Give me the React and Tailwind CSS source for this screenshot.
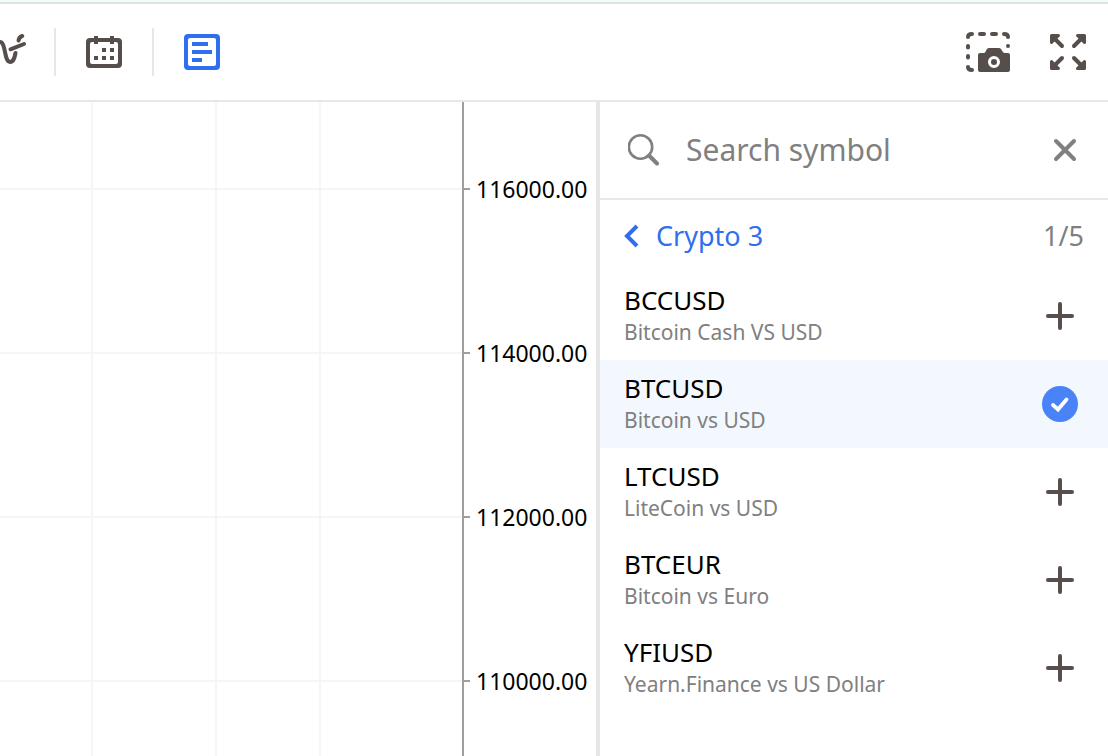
import React, { useState } from "react";

const SYMBOLS = [
    { code: "BCCUSD", description: "Bitcoin Cash VS USD" },
    { code: "BTCUSD", description: "Bitcoin vs USD" },
    { code: "LTCUSD", description: "LiteCoin vs USD" },
    { code: "BTCEUR", description: "Bitcoin vs Euro" },
    { code: "YFIUSD", description: "Yearn.Finance vs US Dollar" },
];

const PRICES = ["116000.00", "114000.00", "112000.00", "110000.00"];

function IndicatorsIcon() {
    return (
        <svg width="44" height="44" viewBox="-20 30 44 44" className="overflow-visible" fill="none" stroke="#564e4a" strokeWidth="4" strokeLinecap="round">
            <path d="M-17 53h8c5 0 4-11 9-11 6 0 4 20 10 20 3.500 0 4.500-4 5.500-9" />
            <path d="M10.500 49.300l13.500-5.300" />
            <path d="M18.500 40.500c0.500-2.500 2-4 3.800-4.500" />
        </svg>
    );
}

function CalendarIcon() {
    return (
        <svg width="36" height="36" viewBox="0 0 36 36" fill="#564e4a">
            <path fillRule="evenodd" d="M8 2h4v2h12V2h4v2h4a4 4 0 0 1 4 4v22a4 4 0 0 1-4 4H4a4 4 0 0 1-4-4V8a4 4 0 0 1 4-4h4zM6 8a2 2 0 0 0-2 2v18a2 2 0 0 0 2 2h24a2 2 0 0 0 2-2V10a2 2 0 0 0-2-2h-2v2h-4V8H12v2H8V8z" />
            <path d="M16 14h4v4h-4zM24 14h4v4h-4zM8 22h4v4H8zM16 22h4v4h-4zM24 22h4v4h-4z" />
        </svg>
    );
}

function WatchlistIcon() {
    return (
        <svg width="36" height="36" viewBox="0 0 36 36" fill="#2f6fed">
            <path fillRule="evenodd" d="M4 0h28a4 4 0 0 1 4 4v28a4 4 0 0 1-4 4H4a4 4 0 0 1-4-4V4a4 4 0 0 1 4-4zM6 4a2 2 0 0 0-2 2v24a2 2 0 0 0 2 2h24a2 2 0 0 0 2-2V6a2 2 0 0 0-2-2z" />
            <path d="M8 8h16v4H8zM8 16h20v4H8zM8 24h10v4H8z" />
        </svg>
    );
}

function ScreenshotIcon() {
    return (
        <svg width="44" height="40" viewBox="0 0 44 40">
            <path d="M2 5c0-2 1-3 4-3M14 2h4M26 2h4M38 2c3 0 4 1 4 3M42 14v0.100M2 14v1.500M2 24v1.500M2 35c0 2 1 3 4 3" fill="none" stroke="#564e4a" strokeWidth="4" strokeLinecap="round" />
            <path fillRule="evenodd" d="M14 21h4c2 0 2-5 5-5h10c3 0 3 5 6 5h3a2 2 0 0 1 2 2v15a2 2 0 0 1-2 2H14a2 2 0 0 1-2-2V23a2 2 0 0 1 2-2zM28 24a6 6 0 1 0 0 12 6 6 0 0 0 0-12z" fill="#564e4a" />
            <circle cx="28" cy="30" r="3" fill="#564e4a" />
        </svg>
    );
}

function FullscreenIcon() {
    return (
        <svg width="36" height="36" viewBox="0 0 36 36" fill="#564e4a" stroke="#564e4a" strokeLinecap="round" strokeLinejoin="round">
            {[0, 90, 180, 270].map((angle) => (
                <g key={angle} transform={`rotate(${angle} 18 18)`}>
                    <path d="M12 12L4 4" strokeWidth="4" />
                    <path d="M1.500 1.500h7l-7 7z" strokeWidth="3" />
                </g>
            ))}
        </svg>
    );
}

function Toolbar() {
    return (
        <header className="border-t-2 border-[#dbe5e5] bg-white">
            <div className="flex h-24 items-center justify-between overflow-hidden pr-[22px]">
                <div className="flex items-center gap-[30px]">
                    <button type="button" aria-label="Indicators" className="-ml-5">
                        <IndicatorsIcon />
                    </button>
                    <span className="h-12 w-0.5 bg-[#e7e7e7]" />
                    <button type="button" aria-label="Calendar">
                        <CalendarIcon />
                    </button>
                    <span className="h-12 w-0.5 bg-[#e7e7e7]" />
                    <button type="button" aria-label="Watchlist">
                        <WatchlistIcon />
                    </button>
                </div>
                <div className="flex items-center gap-10">
                    <button type="button" aria-label="Screenshot">
                        <ScreenshotIcon />
                    </button>
                    <button type="button" aria-label="Fullscreen">
                        <FullscreenIcon />
                    </button>
                </div>
            </div>
        </header>
    );
}

function Chart() {
    return (
        <main className="flex min-w-0 flex-1">
            <div className="min-w-0 flex-1 overflow-hidden">
                <svg className="h-full w-full" stroke="#f5f5f5" strokeWidth="2">
                    {[92, 216, 320].map((x) => (
                        <line key={x} x1={x} x2={x} y1="0" y2="100%" />
                    ))}
                    {[87, 251, 415, 579].map((y) => (
                        <line key={y} x1="0" x2="100%" y1={y} y2={y} />
                    ))}
                </svg>
            </div>
            <ul className="w-[134px] border-l-2 border-[#9e9e9e] pt-[5px]">
                {PRICES.map((price) => (
                    <li key={price} className="flex h-[164px] items-center gap-1.5 text-[23px] leading-8 text-black">
                        <span className="h-0.5 w-1.5 bg-[#9e9e9e]" />
                        {price}
                    </li>
                ))}
            </ul>
        </main>
    );
}

function SymbolRow({ symbol, selected, onSelect }) {
    return (
        <li className={`flex h-[88px] items-center justify-between pr-[30px] pl-6 ${selected ? "bg-[#f3f8ff]" : ""}`}>
            <div>
                <div className="text-[26px] leading-8 text-black">{symbol.code}</div>
                <div className="text-[21px] leading-8 text-[#808080]">{symbol.description}</div>
            </div>
            <button type="button" aria-label={`Add ${symbol.code}`} onClick={onSelect} className="flex h-9 w-9 items-center justify-center">
                {selected ? (
                    <svg width="36" height="36" viewBox="0 0 36 36" fill="none">
                        <circle cx="18" cy="18" r="18" fill="#4a83f7" />
                        <path d="M11 19l5 4.500 8.500-10" stroke="#fff" strokeWidth="3.800" strokeLinecap="round" />
                    </svg>
                ) : (
                    <svg width="28" height="28" viewBox="0 0 28 28" stroke="#564e4a" strokeWidth="4" strokeLinecap="round">
                        <path d="M14 2v24M2 14h24" />
                    </svg>
                )}
            </button>
        </li>
    );
}

function SymbolPanel() {
    const [search, setSearch] = useState("");
    const [selected, setSelected] = useState("BTCUSD");

    return (
        <aside className="w-[512px] border-l-4 border-[#e7e7e7]">
            <div className="flex h-[98px] items-center border-b-2 border-[#e7e7e7] pr-[30px] pl-7">
                <svg width="32" height="32" viewBox="0 0 32 32" fill="none" stroke="#808080" className="shrink-0">
                    <circle cx="12.500" cy="13" r="11.700" strokeWidth="2.600" />
                    <path d="M21 21.500l8 8" strokeWidth="4" strokeLinecap="round" />
                </svg>
                <input
                    type="text"
                    aria-label="Search symbol"
                    placeholder="Search symbol"
                    value={search}
                    onChange={(e) => setSearch(e.target.value)}
                    className="mx-[26px] min-w-0 flex-1 text-3xl text-black outline-none placeholder:text-[#808080]"
                />
                <button type="button" aria-label="Close" onClick={() => setSearch("")}>
                    <svg width="26" height="26" viewBox="0 0 26 26" stroke="#808080" strokeWidth="4" strokeLinecap="round">
                        <path d="M4 4l18 18M22 4L4 22" />
                    </svg>
                </button>
            </div>
            <div className="flex h-[72px] items-center justify-between px-6 text-[27px]">
                <button type="button" className="flex items-center gap-4 text-[#2f6fed]">
                    <svg width="16" height="24" viewBox="0 0 16 24" fill="none" stroke="#2f6fed" strokeWidth="4">
                        <path d="M13 2L3 12l10 10" />
                    </svg>
                    Crypto 3
                </button>
                <span className="text-[#808080]">1/5</span>
            </div>
            <ul>
                {SYMBOLS.map((symbol) => (
                    <SymbolRow
                        key={symbol.code}
                        symbol={symbol}
                        selected={symbol.code === selected}
                        onSelect={() => setSelected(symbol.code)}
                    />
                ))}
            </ul>
        </aside>
    );
}

export default function App() {
    return (
        <div className="flex min-h-screen flex-col bg-[#f4f9f9] pt-0.5 font-['Noto_Sans',sans-serif]">
            <Toolbar />
            <div className="flex flex-1 border-t-2 border-[#e7e7e7] bg-white">
                <Chart />
                <SymbolPanel />
            </div>
        </div>
    );
}
